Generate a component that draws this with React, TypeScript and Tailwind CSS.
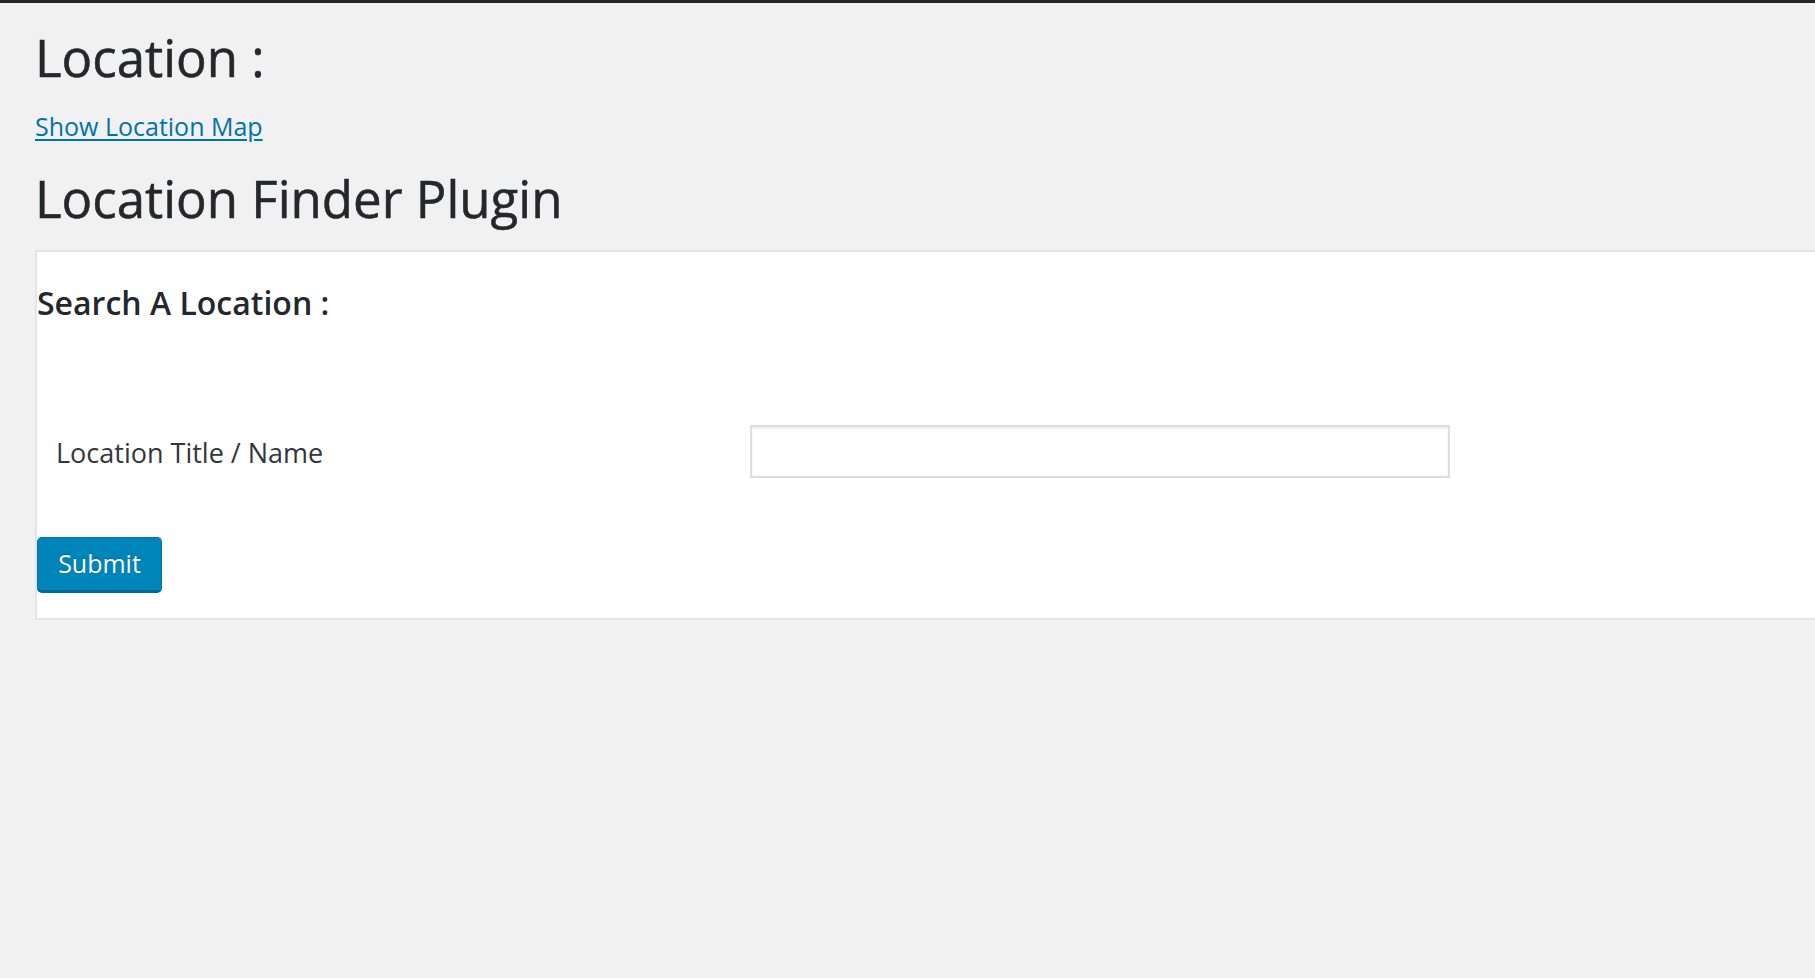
export default function App() {
  return (
    <div className="min-h-screen bg-[#f1f1f1] font-['Open_Sans',sans-serif] text-[#23282d]">
      <div className="h-[3px] bg-[#23282d]" />
      <div className="pl-[35px]">
        <h1 className="mt-[19px] text-[51px] leading-[70px] font-normal [-webkit-text-stroke:0.5px_#23282d]">Location :</h1>
        <a href="#" className="mt-[17px] block w-fit text-[25px] leading-[34px] text-[#0073aa] underline underline-offset-[3px]">
          Show Location Map
        </a>
        <h1 className="mt-[20px] text-[51px] leading-[70px] font-normal [-webkit-text-stroke:0.5px_#23282d]">Location Finder Plugin</h1>
      </div>
      <div className="mt-[17px] ml-[35px] border-y-2 border-l-2 border-[#e5e5e5] bg-white pb-[25px]">
        <h3 className="mt-[28px] text-[32px] leading-[46px] font-semibold text-[#23282d]">Search A Location :</h3>
        <div className="mt-[99px] grid grid-cols-[694px_700px] items-center pl-[19px]">
          <label className="pt-[3px] text-[27px] leading-[40px] text-[#32373c]">Location Title / Name</label>
          <input
            type="text"
            className="h-[53px] border-2 border-[#dddddd] bg-white px-3 text-[24px] shadow-[inset_0_2px_3px_rgba(0,0,0,0.07)] outline-none"
          />
        </div>
        <button className="mt-[59px] h-[56px] w-[125px] rounded-[5px] border border-b-[3px] border-[#0073aa] border-b-[#006799] bg-[#0085ba] text-[25px] text-white [text-shadow:0_-1px_1px_#006799]">
          Submit
        </button>
      </div>
    </div>
  );
}
